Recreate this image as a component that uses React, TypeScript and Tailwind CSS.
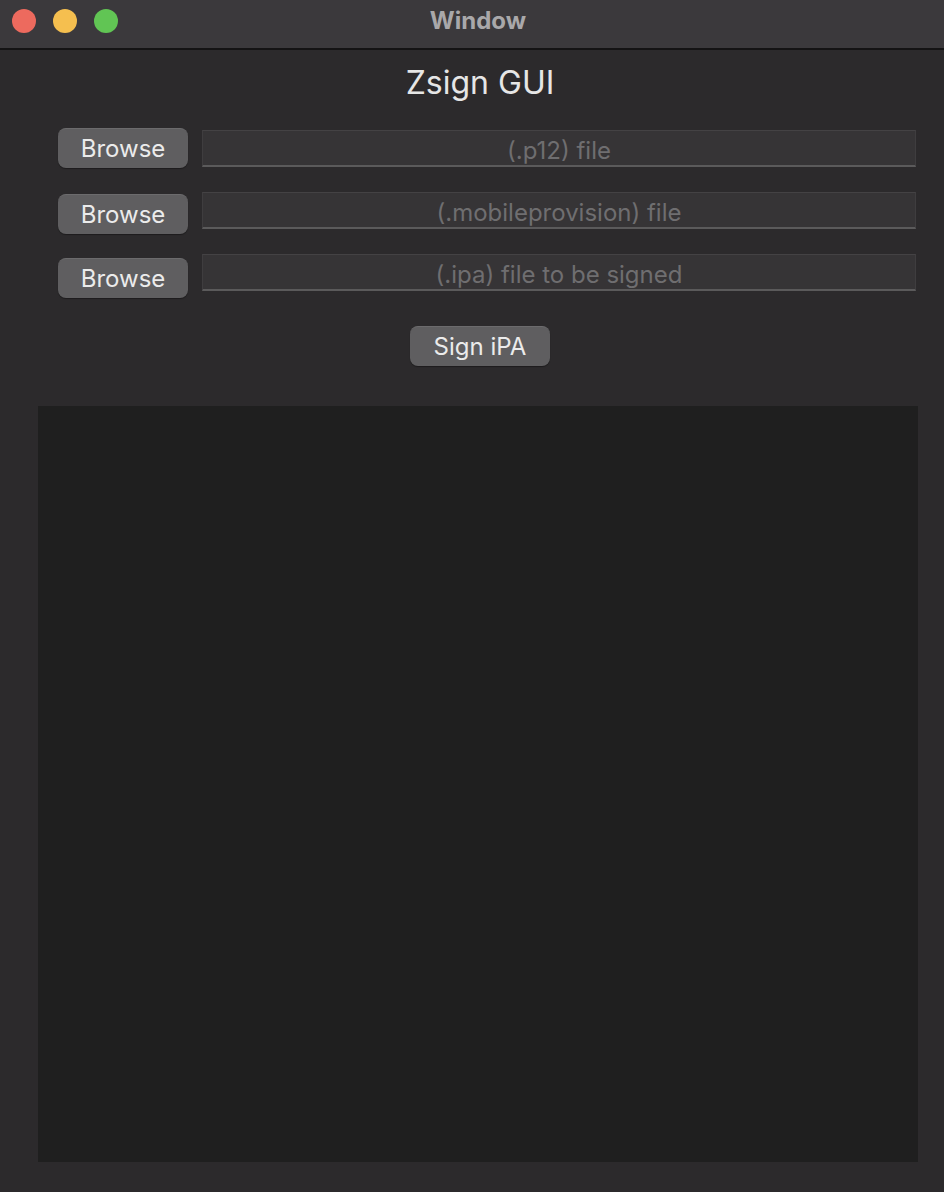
import React from "react";

const font = { fontFamily: 'Inter, "Liberation Sans", "Noto Sans", sans-serif' };

function Field({ placeholder }: { placeholder: string }) {
  return (
    <div className="flex-1 h-[37px] bg-[#363436] border-t border-t-[#444244] border-x border-x-[#3f3d3f] border-b-2 border-b-[#5b5a5b] flex items-center justify-center pt-[5px] text-[24px] text-[#6f6e70]">
      {placeholder}
    </div>
  );
}

function Btn({ label, className = "" }: { label: string; className?: string }) {
  return (
    <div
      className={`h-[40px] shrink-0 rounded-[8px] bg-[#5f5e60] shadow-[0_1px_1px_rgba(0,0,0,0.35)] border-t border-t-[#6c6b6d] flex items-center justify-center text-[24px] text-[#ebebeb] ${className}`}
    >
      {label}
    </div>
  );
}

export default function App() {
  return (
    <div style={font} className="w-[944px] h-[1192px] bg-[#2c2a2c] flex flex-col overflow-hidden">
      <div className="h-[50px] shrink-0 bg-[#3b393c] border-b-2 border-b-[#141314] relative flex items-center justify-center">
        <div className="absolute left-[12px] top-[9px] flex gap-[17px]">
          <div className="w-[24px] h-[24px] rounded-full bg-[#ed6a5e]" />
          <div className="w-[24px] h-[24px] rounded-full bg-[#f5bf4f]" />
          <div className="w-[24px] h-[24px] rounded-full bg-[#61c554]" />
        </div>
        <div className="text-[24px] font-bold text-[#a9a8aa] -mt-[6px] ml-[12px]">Window</div>
      </div>

      <div className="pt-[13px] h-[52px] shrink-0 flex items-center justify-center pl-[16px] text-[32px] text-[#e6e6e6] leading-[40px]">
        Zsign GUI
      </div>

      <div className="mt-[28px] pl-[58px] pr-[28px] flex flex-col gap-[25px]">
        <div className="h-[37px] flex items-start gap-[14px]">
          <Btn label="Browse" className="w-[130px] -mt-[2px]" />
          <Field placeholder="(.p12) file" />
        </div>
        <div className="h-[37px] flex items-start gap-[14px]">
          <Btn label="Browse" className="w-[130px] mt-[2px]" />
          <Field placeholder="(.mobileprovision) file" />
        </div>
        <div className="h-[37px] flex items-start gap-[14px]">
          <Btn label="Browse" className="w-[130px] mt-[4px]" />
          <Field placeholder="(.ipa) file to be signed" />
        </div>
      </div>

      <div className="mt-[35px] flex justify-center pl-[16px]">
        <Btn label="Sign iPA" className="w-[140px]" />
      </div>

      <div className="mt-[40px] ml-[38px] mr-[26px] h-[756px] shrink-0 bg-[#1f1f1f]" />
    </div>
  );
}
